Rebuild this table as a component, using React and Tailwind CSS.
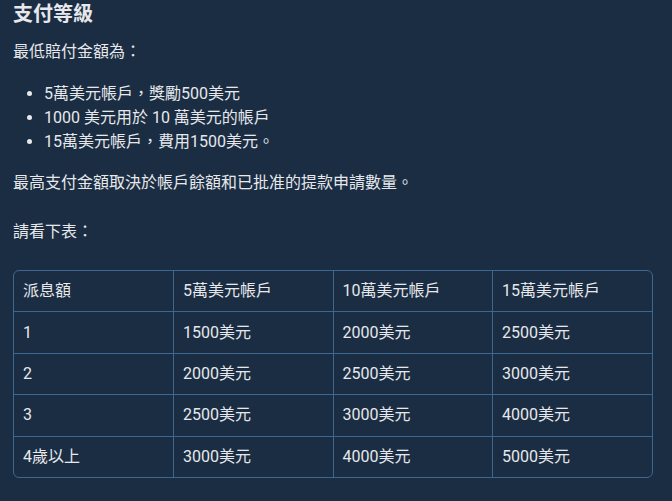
import React from "react";

const rows = [
  ["派息額", "5萬美元帳戶", "10萬美元帳戶", "15萬美元帳戶"],
  ["1", "1500美元", "2000美元", "2500美元"],
  ["2", "2000美元", "2500美元", "3000美元"],
  ["3", "2500美元", "3000美元", "4000美元"],
  ["4歲以上", "3000美元", "4000美元", "5000美元"],
];

const App = () => {
  return (
    <div
      className="w-full min-h-[501px] bg-[#1b2d42] text-[#e6e8ec] px-[13px] text-[16px] leading-6"
      style={{ fontFamily: 'Roboto, "Noto Sans CJK TC", sans-serif' }}
    >
      <h2 className="text-[20px] leading-7 font-bold">支付等級</h2>
      <p className="mt-3">最低賠付金額為：</p>
      <ul className="mt-[18px] list-disc pl-[31px]">
        <li>5萬美元帳戶，獎勵500美元</li>
        <li>1000 美元用於 10 萬美元的帳戶</li>
        <li>15萬美元帳戶，費用1500美元。</li>
      </ul>
      <p className="mt-[17px]">最高支付金額取決於帳戶餘額和已批准的提款申請數量。</p>
      <p className="mt-[25px]">請看下表：</p>
      <div className="mt-[26px] w-[640px] border border-[#3d6690] rounded-md overflow-hidden">
        <table className="w-full border-collapse table-fixed">
          <tbody>
            {rows.map((row, i) => (
              <tr key={i} className={i > 0 ? "border-t border-[#3d6690]" : ""}>
                {row.map((cell, j) => (
                  <td
                    key={j}
                    className={
                      "px-[9px] py-[8.2px] text-left font-normal " +
                      (j > 0 ? "border-l border-[#3d6690]" : "")
                    }
                  >
                    {cell}
                  </td>
                ))}
              </tr>
            ))}
          </tbody>
        </table>
      </div>
    </div>
  );
};

export default App;
